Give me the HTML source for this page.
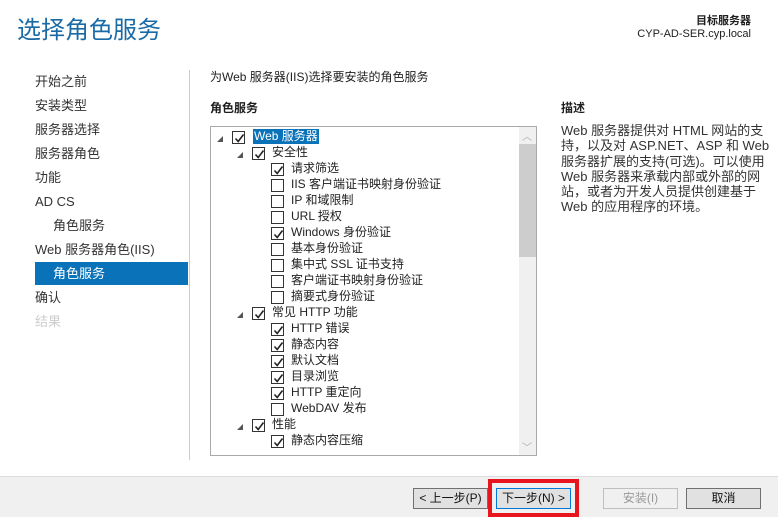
<!DOCTYPE html>
<html><head><meta charset="utf-8"><style>
*{margin:0;padding:0;box-sizing:border-box}
body{width:778px;height:517px;background:#fff;position:relative;overflow:hidden;font-family:"Liberation Sans","Noto Sans CJK SC",sans-serif;font-size:12px;color:#1e1e1e}
.a{position:absolute;white-space:nowrap}
.nav{position:absolute;left:35px;font-size:13px;color:#333;line-height:16px}
.cb{position:absolute;width:13px;height:13px;border:1px solid #333;background:#fff}
.cb svg{position:absolute;left:1px;top:1px}
.tri{position:absolute;width:0;height:0;border-left:6px solid transparent;border-bottom:6px solid #555}
.t{position:absolute;font-size:12px;line-height:15px;color:#222;white-space:nowrap}
.btn{position:absolute;top:488px;height:21px;border:1px solid #707070;background:#e1e1e1;font-size:12px;text-align:center;line-height:19px;color:#111}
</style></head><body>
<div class="a" style="left:17px;top:15px;font-size:24px;color:#1a6ba5;line-height:32px">选择角色服务</div>
<div class="a" style="right:27px;top:15px;font-size:11px;font-weight:bold;line-height:13px">目标服务器</div>
<div class="a" style="right:27px;top:28px;font-size:11px;line-height:13px">CYP-AD-SER.cyp.local</div>

<div class="nav" style="top:74px">开始之前</div>
<div class="nav" style="top:98px">安装类型</div>
<div class="nav" style="top:122px">服务器选择</div>
<div class="nav" style="top:146px">服务器角色</div>
<div class="nav" style="top:170px">功能</div>
<div class="nav" style="top:194px">AD CS</div>
<div class="nav" style="top:218px;left:53px">角色服务</div>
<div class="nav" style="top:242px">Web 服务器角色(IIS)</div>
<div style="position:absolute;left:35px;top:262px;width:153px;height:23px;background:#0a72b9"></div>
<div class="nav" style="top:266px;left:53px;color:#fff">角色服务</div>
<div class="nav" style="top:290px">确认</div>
<div class="nav" style="top:314px;color:#ccc">结果</div>
<div style="position:absolute;left:189px;top:70px;width:1px;height:390px;background:#ccc"></div>

<div class="a" style="left:210px;top:68px;font-size:12px">为Web 服务器(IIS)选择要安装的角色服务</div>
<div class="a" style="left:210px;top:99px;font-size:12px;font-weight:bold">角色服务</div>
<div class="a" style="left:561px;top:99px;font-size:12px;font-weight:bold">描述</div>
<div class="a" style="left:561px;top:123px;font-size:13px;line-height:15.3px;color:#333">Web 服务器提供对 HTML 网站的支<br>持，以及对 ASP.NET、ASP 和 Web<br>服务器扩展的支持(可选)。可以使用<br>Web 服务器来承载内部或外部的网<br>站，或者为开发人员提供创建基于<br>Web 的应用程序的环境。</div>

<div style="position:absolute;left:210px;top:126px;width:327px;height:330px;border:1px solid #aaa;background:#fff">
<div style="position:absolute;right:0;top:0;width:17px;height:328px;background:#f0f0f0"></div>
<div style="position:absolute;right:0;top:17px;width:17px;height:113px;background:#cdcdcd"></div>
<div class="a" style="right:4px;top:1px;color:#aaa;font-size:10px">︿</div>
<div class="a" style="right:4px;top:312px;color:#aaa;font-size:10px">﹀</div>
</div>

<svg width="0" height="0" style="position:absolute"><defs><symbol id="ck" viewBox="0 0 11 11"><path d="M1.5 5.5 L4.2 8.5 L9.5 1.5" fill="none" stroke="#222" stroke-width="1.6"/></symbol></defs></svg>

<div id="tree"></div>
<script>
var rows=[[0,1,1,'Web 服务器'],[1,1,1,'安全性'],[2,1,0,'请求筛选'],[2,0,0,'IIS 客户端证书映射身份验证'],[2,0,0,'IP 和域限制'],[2,0,0,'URL 授权'],[2,1,0,'Windows 身份验证'],[2,0,0,'基本身份验证'],[2,0,0,'集中式 SSL 证书支持'],[2,0,0,'客户端证书映射身份验证'],[2,0,0,'摘要式身份验证'],[1,1,1,'常见 HTTP 功能'],[2,1,0,'HTTP 错误'],[2,1,0,'静态内容'],[2,1,0,'默认文档'],[2,1,0,'目录浏览'],[2,1,0,'HTTP 重定向'],[2,0,0,'WebDAV 发布'],[1,1,1,'性能'],[2,1,0,'静态内容压缩']];
var bx=[232,252,271],tx=[254,272,291],h='';
rows.forEach(function(r,i){var y=137+i*16;
if(r[2])h+='<div class="tri" style="left:'+(bx[r[0]]-15)+'px;top:'+(y-1)+'px"></div>';
h+='<div class="cb" style="left:'+bx[r[0]]+'px;top:'+(y-6)+'px">'+(r[1]?'<svg width="11" height="11"><use href="#ck"/></svg>':'')+'</div>';
h+='<div class="t" style="left:'+tx[r[0]]+'px;top:'+(y-8)+'px;'+(i==0?'background:#0a72b9;color:#fff;padding:0 1px;margin-left:-1px':'')+'">'+r[3]+'</div>';});
document.getElementById('tree').innerHTML=h;
</script>

<div style="position:absolute;left:0;top:476px;width:778px;height:41px;background:#f0f0f0;border-top:1px solid #dcdcdc"></div>
<div class="btn" style="left:413px;width:75px">&lt; 上一步(P)</div>
<div style="position:absolute;left:488px;top:479px;width:91px;height:38px;border:4px solid #e8141e"></div>
<div class="btn" style="left:496px;width:75px;border-color:#0078d7">下一步(N) &gt;</div>
<div class="btn" style="left:603px;width:75px;border-color:#bfbfbf;background:#f0f0f0;color:#999">安装(I)</div>
<div class="btn" style="left:686px;width:75px">取消</div>
</body></html>
